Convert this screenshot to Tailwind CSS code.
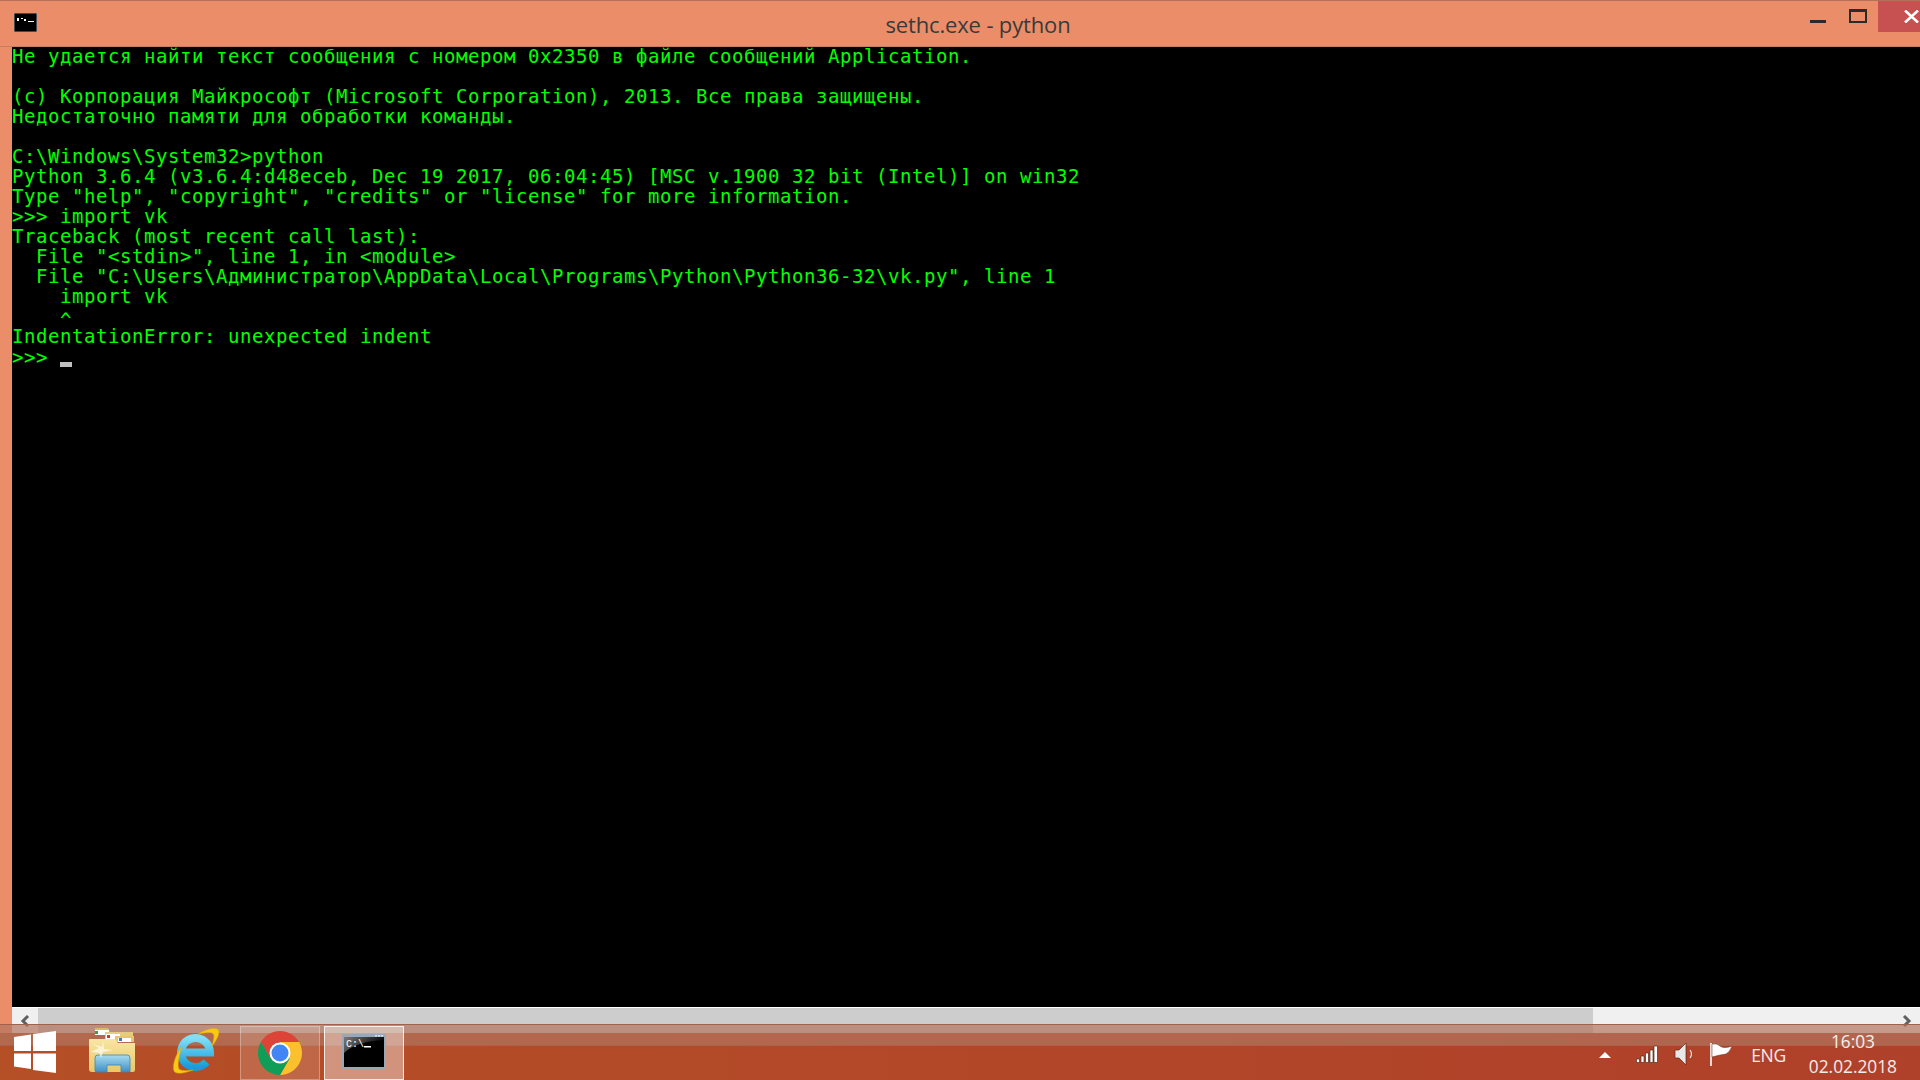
<!DOCTYPE html>
<html lang="en">

<head>
  <meta charset="UTF-8" />
  <title>sethc.exe - python</title>
  <script src="https://cdn.jsdelivr.net/npm/@tailwindcss/browser@4"></script>
</head>

<body class="bg-black">
  <div class="relative h-[1080px] w-[1920px] overflow-hidden bg-gradient-to-r from-[#b54f26] to-[#af402a]">

    <!-- Console window -->
    <div class="flex h-[1033px] flex-col bg-[#eb8d69]">
      <!-- Title bar -->
      <div class="relative flex h-[47px] shrink-0 items-center justify-center border-t border-b border-t-[#b5705a] border-b-[#c87c60]">
        <svg class="absolute left-[14px] top-[12px]" width="23" height="19" viewBox="0 0 23 19">
          <rect width="23" height="19" fill="#000" stroke="#8a96a3" />
          <rect x="3" y="5" width="2" height="3" fill="#fff" />
          <rect x="7" y="5" width="2" height="1" fill="#fff" />
          <rect x="10" y="6" width="2" height="2" fill="#fff" />
          <rect x="14" y="8" width="6" height="1" fill="#fff" />
        </svg>
        <span class="font-['Open_Sans',sans-serif] text-[22px] leading-[26px] text-[#3a3a3a] mt-[1px] ml-[36px] tracking-[-0.15px]">sethc.exe - python</span>
        <!-- Window controls -->
        <div class="absolute right-[94px] top-[19px] h-[3px] w-[16px] bg-[#2b2b2b]"></div>
        <div class="absolute right-[53px] top-[8px] h-[14px] w-[18px] border-2 border-t-[3px] border-[#2b2b2b]"></div>
        <div class="absolute right-0 top-0 flex h-[31px] w-[42px] items-center justify-end bg-[#c75050] pr-[1px]">
          <svg width="15" height="13" viewBox="0 0 15 13">
            <path d="M1 0.5 L14 12.5 M14 0.5 L1 12.5" stroke="#fff" stroke-width="2.6" />
          </svg>
        </div>
      </div>

      <!-- Console output -->
      <div class="ml-[12px] h-[960px] shrink-0 bg-black">
        <pre class="-mt-[1px] font-['DejaVu_Sans_Mono',monospace] text-[19px] leading-[20px] tracking-[0.56px] text-[#00ff00]">Не удается найти текст сообщения с номером 0x2350 в файле сообщений Application.

(c) Корпорация Майкрософт (Microsoft Corporation), 2013. Все права защищены.
Недостаточно памяти для обработки команды.

C:\Windows\System32&gt;python
Python 3.6.4 (v3.6.4:d48eceb, Dec 19 2017, 06:04:45) [MSC v.1900 32 bit (Intel)] on win32
Type "help", "copyright", "credits" or "license" for more information.
&gt;&gt;&gt; import vk
Traceback (most recent call last):
  File "&lt;stdin&gt;", line 1, in &lt;module&gt;
  File "C:\Users\Администратор\AppData\Local\Programs\Python\Python36-32\vk.py", line 1
    import vk
    <span class="inline-block translate-y-[4px]">^</span>
IndentationError: unexpected indent
<span class="mt-[1px] block">&gt;&gt;&gt; <span class="inline-block h-[5px] w-[12px] bg-[#c0c0c0] align-[-3px]"></span></span></pre>
      </div>

      <!-- Horizontal scrollbar -->
      <div class="ml-[12px] flex h-[26px] shrink-0 border-t border-white bg-[#f0f0f0]">
        <div class="flex h-full w-[26px] shrink-0 items-start justify-center pt-[7px]">
          <svg width="10" height="12" viewBox="0 0 10 12"><path d="M8 1 L3 6 L8 11" fill="none" stroke="#606060" stroke-width="3" /></svg>
        </div>
        <div class="h-full w-[1555px] bg-[#cdcdcd]"></div>
        <div class="flex h-full flex-1 items-start justify-end pr-[8px] pt-[7px]">
          <svg width="10" height="12" viewBox="0 0 10 12"><path d="M2 1 L7 6 L2 11" fill="none" stroke="#606060" stroke-width="3" /></svg>
        </div>
      </div>
    </div>

    <!-- Taskbar, lies over the bottom of the window -->
    <div class="absolute inset-x-0 bottom-0 flex h-[56px] border-t border-[#a0624a]">
      <div class="absolute inset-x-0 top-0 h-[21px] border-b border-[#a9634a] bg-[#b2755e]/70"></div>

      <!-- Start -->
      <svg class="relative ml-[14px] mt-[6px] shrink-0" width="42" height="42" viewBox="0 0 42 42">
        <path fill="#fff" d="M0 6 L17 3.5 V20 H0 Z M19 3 L42 0 V20 H19 Z M0 22.5 H17 V38 L0 35.5 Z M19 22.5 H42 V42 L19 39 Z" />
      </svg>

      <!-- Explorer -->
      <svg class="relative ml-[33px] mt-[3px] shrink-0" width="46" height="45" viewBox="0 0 46 45">
        <defs>
          <linearGradient id="folderFill" x1="0" y1="0" x2="0" y2="1">
            <stop offset="0" stop-color="#f8e6a4" />
            <stop offset="1" stop-color="#e9c766" />
          </linearGradient>
          <linearGradient id="shelfFill" x1="0" y1="0" x2="0" y2="1">
            <stop offset="0" stop-color="#a8dcf2" />
            <stop offset="1" stop-color="#3f8fc6" />
          </linearGradient>
        </defs>
        <path d="M6 0 H19 L21 4 H6 Z" fill="#d9bb62" />
        <rect x="6" y="2" width="14" height="5" fill="#fff" />
        <rect x="6" y="3" width="3" height="3" fill="#3e9e45" />
        <path d="M16 4 H44 V14 H16 Z" fill="#e6cc7c" />
        <rect x="17" y="6" width="14" height="5" fill="#fff" />
        <rect x="18" y="7" width="3" height="3" fill="#d9342b" />
        <path d="M26 8 H45 V14 H26 Z" fill="#e3c66f" />
        <rect x="29" y="10" width="13" height="4" fill="#fff" />
        <rect x="30" y="10" width="3" height="3" fill="#2d7fc4" />
        <path d="M1 11 H26 L29 15 H46 V42 Q46 44 44 44 H3 Q0 44 0 41 V12 Q0 11 1 11 Z" fill="url(#folderFill)" />
        <path d="M6 43 V30 Q6 27 9 27 H38 Q41 27 41 30 V44 H32 V37 H18 V44 H8 Q6 44 6 43 Z" fill="url(#shelfFill)" stroke="#3a87b8" stroke-width="0.8" />
        <path d="M2 24 L10 20 L4 16 L13 19 L14 13 L15 21 L24 22 L14 24 L12 30 L10 25 Z" fill="#fff" opacity="0.65" />
      </svg>

      <!-- Internet Explorer -->
      <svg class="relative ml-[38px] mt-[3px] shrink-0" width="46" height="46" viewBox="0 0 46 46">
        <defs>
          <linearGradient id="ieFill" x1="0" y1="0" x2="0" y2="1">
            <stop offset="0" stop-color="#7fe0f8" />
            <stop offset="1" stop-color="#1a9ad8" />
          </linearGradient>
        </defs>
        <path d="M12 24.5 H37 A14.5 14.5 0 1 0 33.5 34" fill="none" stroke="url(#ieFill)" stroke-width="8" />
        <path d="M25 6 C33 1 43 -1 45.5 2 C47 5 44 12 39 18 C41 11 42 6 39 5 C36 4 31 5 25 6 Z" fill="#f6c913" stroke="#e2a70c" stroke-width="0.5" />
        <path d="M9 18 C3 26 -1 37 1 43 C3 47 12 45 20 42 C13 43 8 43 6 41 C4 38 6 28 9 18 Z" fill="#f6c913" stroke="#e2a70c" stroke-width="0.5" />
      </svg>

      <!-- Chrome, running -->
      <div class="relative ml-[21px] mt-[1px] flex h-[54px] w-[80px] shrink-0 items-center justify-center border border-white/30 bg-white/15">
        <svg width="44" height="44" viewBox="0 0 44 44">
          <path fill="#db4437" d="M41.05 11 A22 22 0 0 0 2.95 11 L12.47 27.5 L22 22 L22 11 Z" />
          <path fill="#fbc02d" d="M41.05 11 A22 22 0 0 1 22 44 L31.53 27.5 L22 22 L22 11 Z" />
          <path fill="#0f9d58" d="M22 44 A22 22 0 0 1 2.95 11 L12.47 27.5 L22 22 L31.53 27.5 Z" />
          <circle cx="22" cy="22" r="10.5" fill="#fff" />
          <circle cx="22" cy="22" r="8.5" fill="#4285f4" />
        </svg>
      </div>

      <!-- Console, active -->
      <div class="relative ml-[4px] mt-[1px] flex h-[54px] w-[80px] shrink-0 items-start justify-center border border-white/80 bg-white/40 pt-[7px]">
        <svg width="44" height="35" viewBox="0 0 44 35">
          <defs>
            <linearGradient id="glare" x1="0" y1="0" x2="1" y2="0.4">
              <stop offset="0" stop-color="#7a7a7a" />
              <stop offset="1" stop-color="#000" />
            </linearGradient>
          </defs>
          <rect width="44" height="35" rx="1" fill="#9aa7b4" />
          <rect x="2" y="3" width="40" height="30" fill="#000" />
          <path d="M2 3 H42 V6 C24 7 10 11 2 19 Z" fill="url(#glare)" />
          <text x="4" y="13" fill="#fff" font-family="Liberation Mono, monospace" font-size="10">C:\</text>
          <rect x="22" y="12" width="7" height="1.5" fill="#fff" />
          <rect x="33" y="1" width="2" height="1.5" fill="#dfe6ec" />
          <rect x="36" y="1" width="2" height="1.5" fill="#dfe6ec" />
          <rect x="39" y="1" width="2" height="1.5" fill="#dfe6ec" />
        </svg>
      </div>

      <!-- Tray -->
      <div class="relative ml-auto flex h-full items-start font-['Open_Sans',sans-serif] text-white/90">
        <svg class="mt-[27px]" width="12" height="6" viewBox="0 0 12 6"><path d="M0 6 L6 0 L12 6 Z" fill="#fff" /></svg>
        <svg class="ml-[25px] mt-[20px]" width="22" height="18" viewBox="0 0 22 18">
          <path fill="#fff" stroke="#5a2a18" stroke-width="0.7" d="M0.5 14 h3 v3.5 h-3 Z M5 11 h3 v6.5 h-3 Z M9.5 8 h3 v9.5 h-3 Z M14 5 h3 v12.5 h-3 Z M18 1 h3.5 v16.5 h-3.5 Z" />
        </svg>
        <svg class="ml-[16px] mt-[17px]" width="21" height="24" viewBox="0 0 21 24">
          <path d="M1 8 H5 L12 1 V23 L5 16 H1 Z" fill="#e8e8e8" stroke="#5a2a18" stroke-width="0.7" />
          <path d="M16 8 Q19 12 16 16" fill="none" stroke="#e8e8e8" stroke-width="1.2" />
        </svg>
        <svg class="ml-[14px] mt-[17px]" width="24" height="24" viewBox="0 0 24 24">
          <path d="M2 1 V24" stroke="#fff" stroke-width="1.6" />
          <path d="M3 2 Q8 1 11 4 Q15 7 23 4 Q21 10 17 12 Q10 13 3 15 Z" fill="#fff" stroke="#5a2a18" stroke-width="0.5" />
        </svg>
        <span class="ml-[18px] mt-[18px] text-[17.5px] leading-[24px] tracking-[-0.3px]">ENG</span>
        <div class="ml-[23px] mr-[23px] mt-[4px] flex flex-col items-center text-[17.3px] leading-[25px]">
          <span>16:03</span>
          <span>02.02.2018</span>
        </div>
      </div>
    </div>
  </div>
</body>

</html>
